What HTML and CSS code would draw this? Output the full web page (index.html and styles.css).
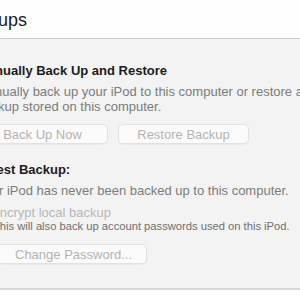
FILE: index.html
```html
<!DOCTYPE html>
<html lang="en">
<head>
    <meta charset="UTF-8">
    <title>Backups</title>
    <link rel="stylesheet" href="styles.css">
</head>
<body>
    <div class="window">
        <div class="title-bar">
            <h1 class="title">Backups</h1>
        </div>
        <div class="panel">
            <h2 class="section-title">Manually Back Up and Restore</h2>
            <p class="desc">Manually back up your iPod to this computer or restore a backup stored on this computer.</p>
            <div class="button-row">
                <button class="btn btn-backup" disabled>Back Up Now</button>
                <button class="btn btn-restore" disabled>Restore Backup</button>
            </div>
            <h2 class="section-title latest">Latest Backup:</h2>
            <p class="desc">Your iPod has never been backed up to this computer.</p>
            <label class="check-row">
                <input type="checkbox" disabled>
                <span>Encrypt local backup</span>
            </label>
            <p class="note">This will also back up account passwords used on this iPod.</p>
            <button class="btn btn-password" disabled>Change Password...</button>
        </div>
    </div>
</body>
</html>
```

FILE: styles.css
```css
html, body {
    margin: 0;
    padding: 0;
    background: #ffffff;
    overflow: hidden;
}

body {
    font-family: 'Liberation Sans', Arial, sans-serif;
    color: #1d1d1d;
}

.window {
    width: 330px;
    margin-left: -23px;
}

.title-bar {
    height: 39px;
    background: #fefefe;
    border-bottom: 1px solid #cdcdcd;
    box-sizing: border-box;
}

.title {
    margin: 0 0 0 -19px;
    padding-top: 10px;
    font-size: 18px;
    font-weight: 400;
    line-height: 20px;
    color: #1a1a1a;
}

.panel {
    background: #f3f3f3;
    height: 251px;
    border-bottom: 2px solid #d9d9d9;
    padding-top: 24px;
    box-sizing: border-box;
}

.section-title {
    margin: 0;
    font-size: 13px;
    font-weight: 700;
    line-height: 16px;
    color: #1c1c1c;
}

.desc {
    margin: 5px 0 0;
    font-size: 13px;
    line-height: 15px;
    color: #7b7b7b;
}

.button-row {
    display: flex;
    gap: 10px;
    margin-top: 10px;
}

.btn {
    font-family: inherit;
    font-size: 13px;
    height: 20px;
    padding: 0;
    white-space: nowrap;
    background: #fbfbfb;
    border: 1px solid #e2e2e2;
    border-radius: 5px;
    color: #b3b3b3;
    box-shadow: 0 1px 1px rgba(0, 0, 0, 0.04);
}

.btn-backup {
    width: 131px;
}

.btn-restore {
    width: 131px;
}

.latest {
    margin-top: 18px;
}

.check-row {
    display: flex;
    align-items: center;
    gap: 4px;
    margin-top: 7px;
    margin-left: -4px;
    font-size: 13px;
    line-height: 15px;
    color: #b8b8b8;
}

.check-row input {
    margin: 0;
    width: 14px;
    height: 14px;
}

.note {
    margin: 0 0 0 16px;
    font-size: 11.2px;
    line-height: 13px;
    white-space: nowrap;
    color: #6f6f6f;
}

.btn-password {
    margin-top: 11px;
    margin-left: 20px;
    width: 150px;
    text-align: left;
    padding-left: 17px;
}
```
